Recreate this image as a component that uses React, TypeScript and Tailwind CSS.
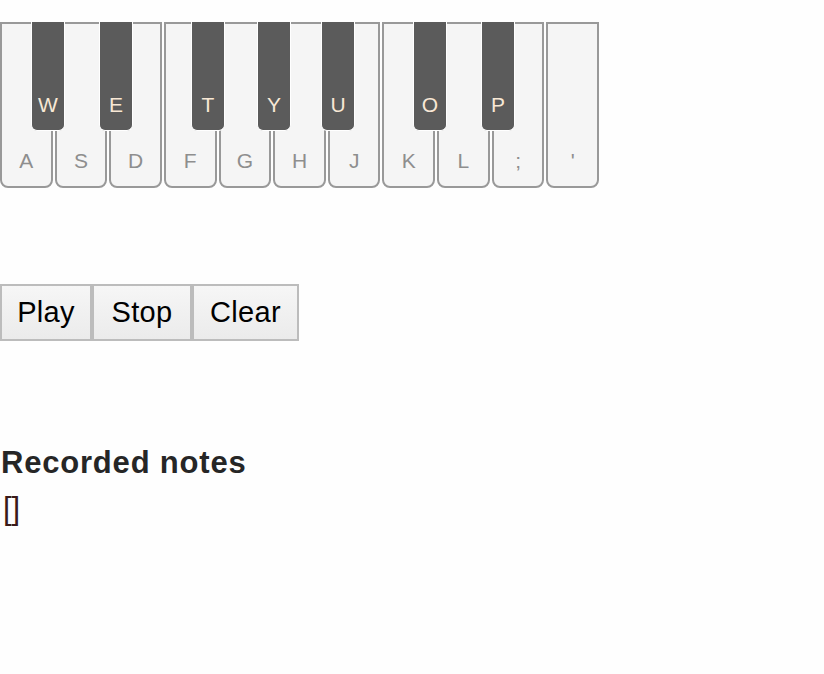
const whiteKeys = ["A", "S", "D", "F", "G", "H", "J", "K", "L", ";", "'"];

const blackKeys = [
  { label: "W", left: "left-[31px]" },
  { label: "E", left: "left-[99px]" },
  { label: "T", left: "left-[191px]" },
  { label: "Y", left: "left-[257px]" },
  { label: "U", left: "left-[321px]" },
  { label: "O", left: "left-[413px]" },
  { label: "P", left: "left-[481px]" },
];

const buttons = [
  { label: "Play", width: "w-[92px]" },
  { label: "Stop", width: "w-[100px]" },
  { label: "Clear", width: "w-[107px]" },
];

export default function App() {
  return (
    <div className="min-h-[674px] bg-[#fefefe] font-['Liberation_Sans',Arial,sans-serif] text-[#212529]">
      <div className="pt-[22px]">
        <div className="relative flex w-[600px] h-[166px]">
          {whiteKeys.map((k) => (
            <div
              key={k}
              className="flex-1 mx-[1px] first:ml-0 last:mr-0 flex items-end justify-center pb-[10px] border-2 border-[#999] rounded-b-[8px] bg-[#f5f5f5] text-[21px] text-[#8e8e8e]"
            >
              {k}
            </div>
          ))}
          {blackKeys.map((k) => (
            <div
              key={k.label}
              className={`absolute top-0 ${k.left} w-[34px] h-[109px] flex items-end justify-center pb-[10px] bg-[#5b5b5b] border border-t-0 border-white rounded-b-[6px] text-[21px] text-[#f8e8d5]`}
            >
              {k.label}
            </div>
          ))}
        </div>
      </div>

      <div className="mt-[96px] flex">
        {buttons.map((b) => (
          <button
            key={b.label}
            className={`${b.width} h-[57px] border-2 border-[#bcbcbc] bg-gradient-to-b from-[#f6f6f6] to-[#ebebeb] text-[29px] tracking-[0.3px] text-black`}
          >
            {b.label}
          </button>
        ))}
      </div>

      <h3 className="mt-[104px] pl-[1px] text-[31px] font-bold leading-[36px] tracking-[0.8px] text-[#262626]">
        Recorded notes
      </h3>
      <div className="mt-[10px] text-[31px] leading-[36px] text-[#3a1a1a] pl-[3px]">[]</div>
    </div>
  );
}
